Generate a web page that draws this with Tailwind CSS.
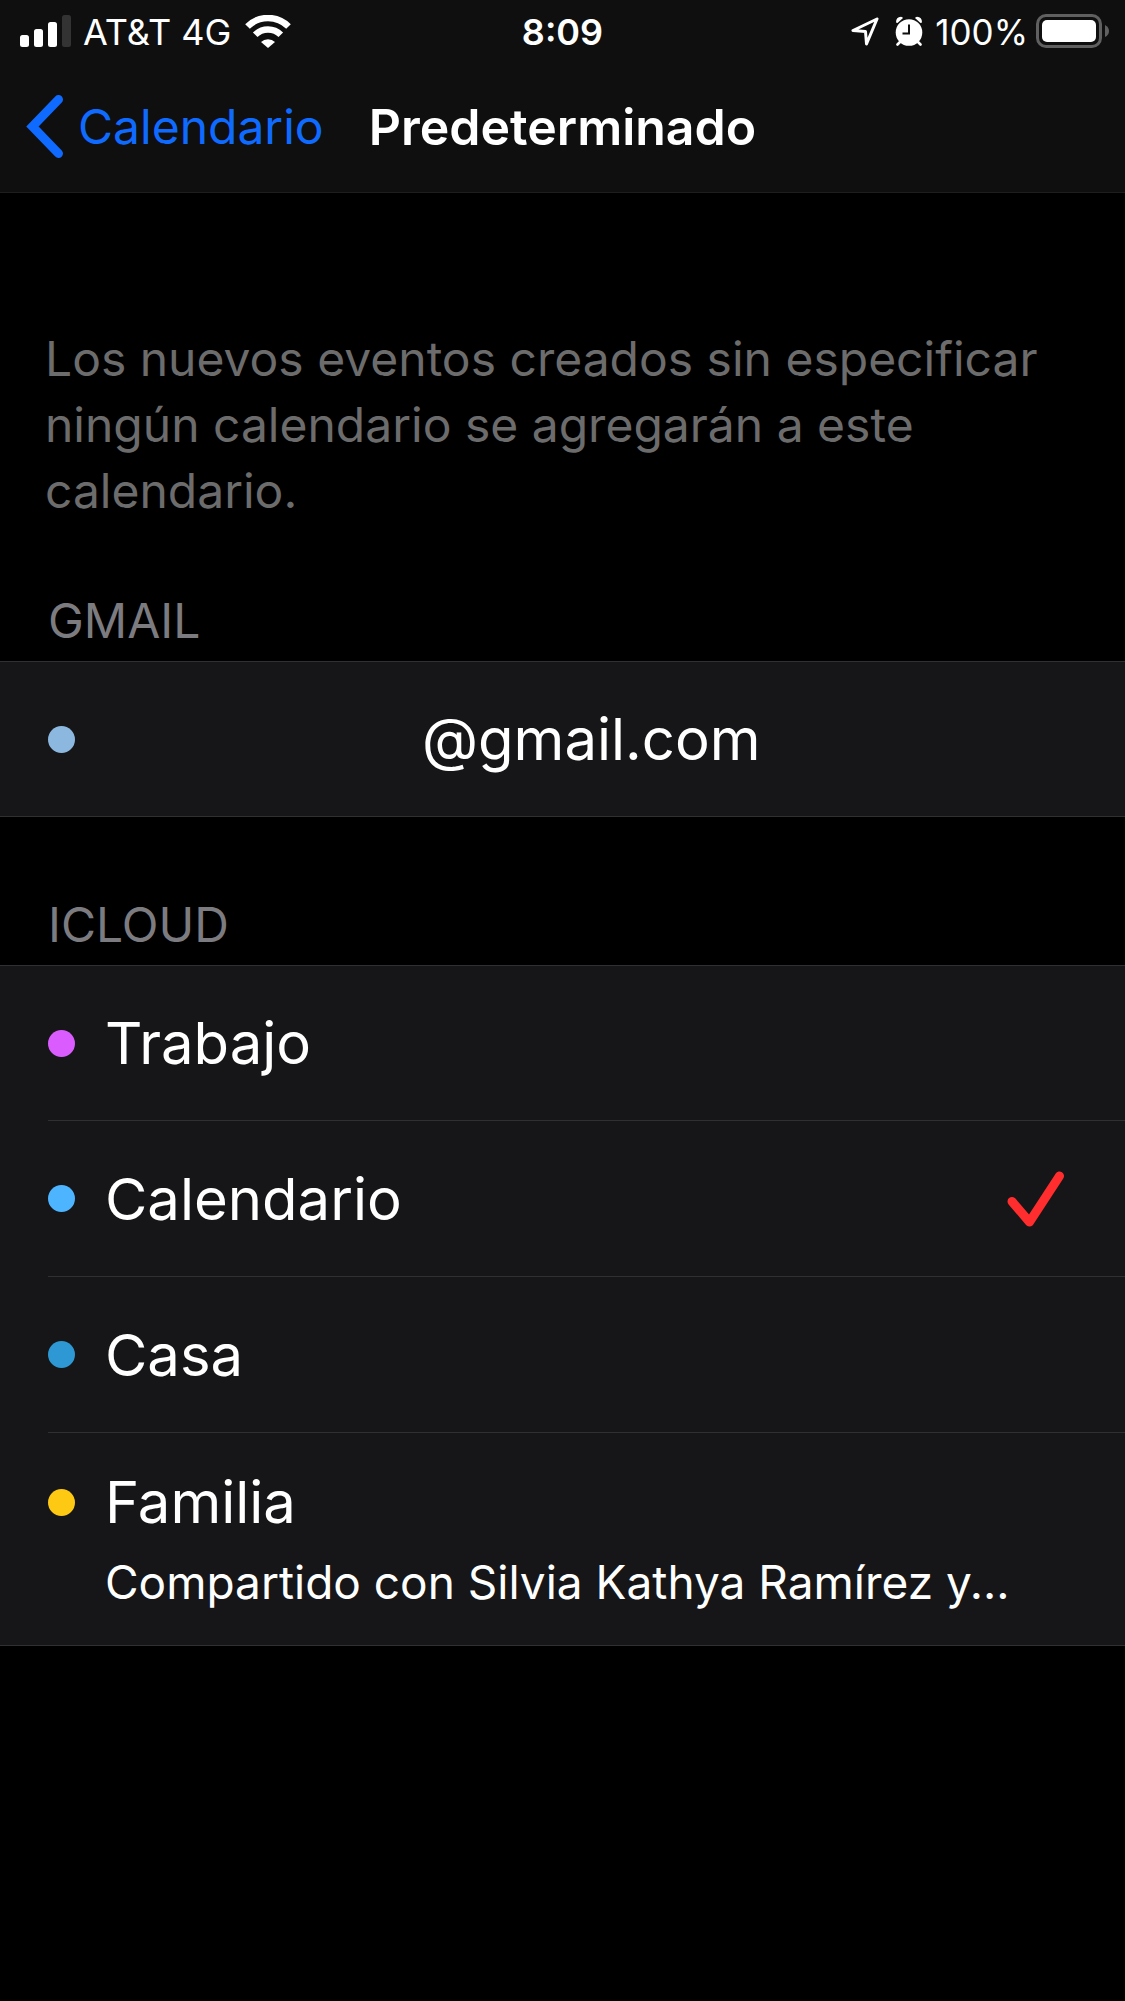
<!DOCTYPE html>
<html lang="es">
<head>
<meta charset="utf-8">
<meta name="viewport" content="width=device-width, initial-scale=1">
<title>Predeterminado</title>
<script src="https://cdn.jsdelivr.net/npm/@tailwindcss/browser@4"></script>
</head>
<body class="min-h-screen bg-black font-['Inter',sans-serif] text-white">
<header class="border-b border-[#1e1e1f] bg-[#0f0f0f]">
  <div class="grid h-[60px] grid-cols-[1fr_auto_1fr] items-center px-4 text-[36px] leading-[60px]">
    <div class="flex items-center gap-3 pl-1">
      <svg class="h-8 w-[51px]" viewBox="0 0 51 32" fill="#fff" aria-label="Señal">
        <rect x="0" y="20" width="9" height="12" rx="2.5"/>
        <rect x="14" y="14" width="9" height="18" rx="2.5"/>
        <rect x="28" y="7" width="9" height="25" rx="2.5"/>
        <rect x="42" y="0" width="9" height="32" rx="2.5" fill="#333"/>
      </svg>
      <span class="pt-0.5">AT&amp;T 4G</span>
      <svg class="ml-0.5 h-[33px] w-[46px]" viewBox="0 0 46 33" fill="none" stroke="#fff" aria-label="Wi-Fi">
        <path d="M2.500 11.500a29 29 0 0 1 41 0" stroke-width="6.500"/>
        <path d="M10.200 19.800a18.200 18.200 0 0 1 25.600 0" stroke-width="6.500"/>
        <path d="M16 27a10 10 0 0 1 14 0L23 33z" fill="#fff" stroke="none"/>
      </svg>
    </div>
    <span class="pt-0.5 font-semibold">8:09</span>
    <div class="flex items-center justify-end gap-2">
      <svg class="mr-2 h-[30px] w-7" viewBox="0 0 28 30" fill="none" stroke="#fff" stroke-width="3" stroke-linejoin="round" aria-label="Ubicación">
        <path d="M26 3 2 14.500 14.500 15.500 15.500 28z"/>
      </svg>
      <svg class="mr-1 h-[30px] w-7" viewBox="0 0 28 30" aria-label="Alarma">
        <circle cx="14" cy="16.500" r="13.300" fill="#fff"/>
        <path d="M1 6.500Q1 1 6 .8 7.500 1 8 2L2.500 7zM27 6.500Q27 1 22 .8 20.500 1 20 2L25.500 7z" fill="#fff"/>
        <path d="M5 26 2.500 28.500M23 26l2.500 2.500" stroke="#fff" stroke-width="2.600" stroke-linecap="round"/>
        <path d="M14 8.500v9H7.500" fill="none" stroke="#0f0f0f" stroke-width="2"/>
      </svg>
      <span class="pt-0.5 text-[35px]">100%</span>
      <svg class="h-[34px] w-[73px]" viewBox="0 0 73 34" aria-label="Batería">
        <rect x="1.500" y="1.500" width="63" height="31" rx="8.500" fill="none" stroke="#606060" stroke-width="3"/>
        <rect x="6" y="6" width="54" height="22" rx="5" fill="#fff"/>
        <path d="M69 11q4 2 4 6t-4 6z" fill="#606060"/>
      </svg>
    </div>
  </div>
  <nav class="grid h-[132px] grid-cols-[1fr_auto_1fr] items-center px-6 leading-[66px]">
    <a href="#" class="flex items-center gap-[14px] text-[48px] text-[#0f6bff]">
      <svg class="h-[66px] w-10" viewBox="0 0 40 66" fill="none" stroke="currentColor" stroke-width="9" stroke-linecap="round" stroke-linejoin="miter" aria-hidden="true">
        <path d="M34.500 6.500 8.500 33.500 34.500 60.500"/>
      </svg>
      <span class="pt-0.5">Calendario</span>
    </a>
    <h1 class="pt-0.5 text-[50px] font-semibold">Predeterminado</h1>
  </nav>
</header>
<main>
  <p class="px-[45px] pt-[133px] text-[48px] leading-[66px] text-[#6c6c6c]">Los nuevos eventos creados sin especificar ningún calendario se agregarán a este calendario.</p>
  <fieldset>
    <legend class="px-12 pt-16 pb-[7px] text-[48px] leading-[66px] text-[#7c7c80]">GMAIL</legend>
    <div class="border-y border-[#303032] bg-[#161618]">
      <label class="relative flex h-[154px] items-center gap-[30px] pr-[60px] pl-12">
        <input type="radio" name="calendario" class="peer sr-only">
        <span class="size-[27px] rounded-full bg-[#8cb8e0]"></span>
        <span class="ml-[317px] text-[58px] leading-[78px]">@gmail.com</span>
      </label>
    </div>
  </fieldset>
  <fieldset>
    <legend class="px-12 pt-[75px] pb-[7px] text-[48px] leading-[66px] text-[#7c7c80]">ICLOUD</legend>
    <div class="border-y border-[#303032] bg-[#161618] pl-12">
      <label class="relative flex h-[155px] items-center gap-[30px] border-b border-[#303032] pr-[60px]">
        <input type="radio" name="calendario" class="peer sr-only">
        <span class="size-[27px] rounded-full bg-[#da5cff]"></span>
        <span class="text-[58px] leading-[78px]">Trabajo</span>
      </label>
      <label class="relative flex h-[156px] items-center gap-[30px] border-b border-[#303032] pr-[60px]">
        <input type="radio" name="calendario" class="peer sr-only" checked>
        <span class="size-[27px] rounded-full bg-[#4db4ff]"></span>
        <span class="text-[58px] leading-[78px]">Calendario</span>
        <svg class="ml-auto hidden h-14 w-[58px] peer-checked:block" viewBox="0 0 58 56" fill="none" stroke="#ff2d2d" stroke-width="9" stroke-linecap="round" stroke-linejoin="round" aria-hidden="true">
          <path d="M5 30.500 22.500 51 52.500 5"/>
        </svg>
      </label>
      <label class="relative flex h-[156px] items-center gap-[30px] border-b border-[#303032] pr-[60px]">
        <input type="radio" name="calendario" class="peer sr-only">
        <span class="size-[27px] rounded-full bg-[#2d98d4]"></span>
        <span class="text-[58px] leading-[78px]">Casa</span>
      </label>
      <label class="relative grid grid-cols-[27px_1fr] items-center gap-x-[30px] pt-[30px] pr-[60px] pb-[30px]">
        <input type="radio" name="calendario" class="peer sr-only">
        <span class="size-[27px] rounded-full bg-[#fec912]"></span>
        <span class="text-[58px] leading-[78px]">Familia</span>
        <span class="col-start-2 pt-2 text-[46px] leading-[66px]">Compartido con Silvia Kathya Ramírez y...</span>
      </label>
    </div>
  </fieldset>
</main>
</body>
</html>
